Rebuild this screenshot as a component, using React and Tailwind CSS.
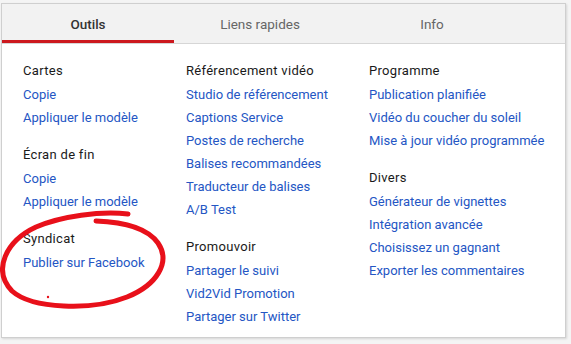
import React from 'react';

const columns = [
  {
    x: 'w-[163px]',
    groups: [
      { title: 'Cartes', links: ['Copie', 'Appliquer le modèle'] },
      { title: 'Écran de fin', links: ['Copie', 'Appliquer le modèle'] },
      { title: 'Syndicat', links: ['Publier sur Facebook'] },
    ],
  },
  {
    x: 'w-[183px]',
    groups: [
      {
        title: 'Référencement vidéo',
        links: ['Studio de référencement', 'Captions Service', 'Postes de recherche', 'Balises recommandées', 'Traducteur de balises', 'A/B Test'],
      },
      { title: 'Promouvoir', links: ['Partager le suivi', 'Vid2Vid Promotion', 'Partager sur Twitter'] },
    ],
  },
  {
    x: 'flex-1',
    groups: [
      { title: 'Programme', links: ['Publication planifiée', 'Vidéo du coucher du soleil', 'Mise à jour vidéo programmée'] },
      { title: 'Divers', links: ['Générateur de vignettes', 'Intégration avancée', 'Choisissez un gagnant', 'Exporter les commentaires'] },
    ],
  },
];

const tabs = ['Outils', 'Liens rapides', 'Info'];

export default function App() {
  return (
    <div className="w-[571px] h-[344px] bg-[#f4f4f4] pt-[3px] pl-[1px] font-['Roboto',sans-serif] text-[13px] relative overflow-hidden">
      <div className="w-[565px] h-[335px] bg-white border border-[#cfcfcf] shadow-[1px_1px_2px_rgba(0,0,0,0.12)]">
        {/* tab bar */}
        <div className="flex h-[40px] bg-[#f2f2f2] border-b border-[#d6d6d6]">
          {tabs.map((t, i) => (
            <div
              key={t}
              className={`w-[172px] flex items-center justify-center text-[13.5px] ${
                i === 0 ? 'text-[#333] font-medium border-b-[3px] border-[#cc181e] pt-[5px]' : 'text-[#666] pt-[2px]'
              }`}
            >
              {t}
            </div>
          ))}
        </div>

        {/* menu columns */}
        <div className="flex pl-[21px] pt-[18px]">
          {columns.map((col, ci) => (
            <div key={ci} className={`${col.x} flex flex-col gap-[14px]`}>
              {col.groups.map((g) => (
                <div key={g.title} className="flex flex-col">
                  <div className="h-[24px] leading-[18px] text-[#1a1a1a] tracking-[0.3px]">{g.title}</div>
                  {g.links.map((l, li) => (
                    <a key={li} className="h-[23px] leading-[18px] text-[#2456c4] cursor-pointer">
                      {l}
                    </a>
                  ))}
                </div>
              ))}
            </div>
          ))}
        </div>
      </div>

      {/* hand-drawn annotation */}
      <svg className="absolute left-0 top-0 pointer-events-none" width="571" height="344" viewBox="0 0 571 344">
        <path
          d="M128 214 C 100 211, 62 216, 36 227 C 6 241, -8 270, 12 291 C 32 309, 92 311, 127 297 C 157 285, 171 262, 158 243 C 148 229, 126 222, 96 221"
          fill="none"
          stroke="#e8101a"
          strokeWidth="5"
          strokeLinecap="round"
        />
        <circle cx="48" cy="297" r="1.2" fill="#e8101a" />
      </svg>
    </div>
  );
}
